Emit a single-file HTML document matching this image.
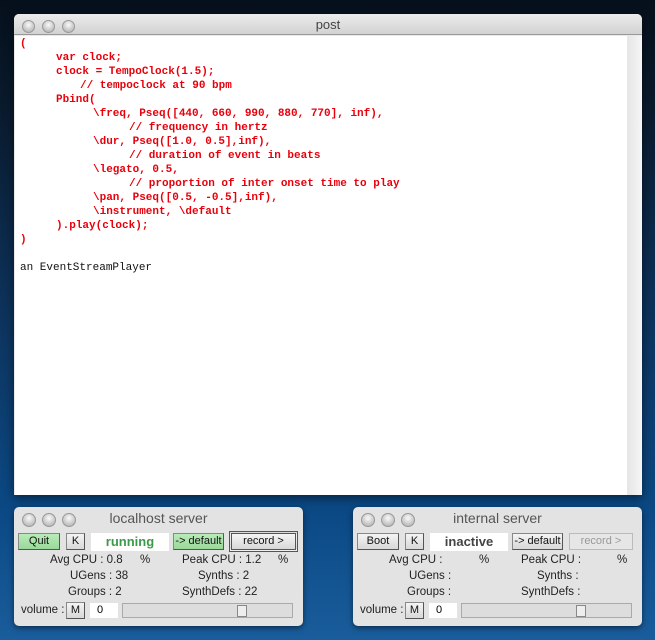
<!DOCTYPE html>
<html><head><meta charset="utf-8"><style>
*{margin:0;padding:0;box-sizing:border-box}
body{width:655px;height:640px;overflow:hidden;position:relative;font-family:"Liberation Sans",sans-serif;
background:linear-gradient(180deg,#06101c 0px,#0a1c30 120px,#0d3560 330px,#0b4a86 520px,#1a5d9c 640px);}
.win{position:absolute;background:#e8e8e8;border-radius:5px 5px 0 0;box-shadow:0 3px 10px rgba(0,0,0,.5)}
.tb{position:absolute;left:0;right:0;top:0;height:21px;border-radius:5px 5px 0 0;background:linear-gradient(#ececec,#d2d2d2);border-bottom:1px solid #999;text-align:center;font-size:13px;color:#444;line-height:21px}
.lights{position:absolute;left:8px;top:4px}
.lights i{display:inline-block;width:13px;height:13px;border-radius:50%;margin-right:7px;background:radial-gradient(circle at 50% 35%,#fafafa,#c8c8c8 60%,#aaa);border:1px solid #999}
.code{position:absolute;left:1px;top:22px;width:612px;bottom:0;background:#fff}
.sb{position:absolute;right:0;top:22px;width:14px;bottom:0;background:linear-gradient(90deg,#e6e6e6,#f6f6f6)}
.l{position:absolute;font-family:"Liberation Mono",monospace;font-weight:bold;font-size:11px;color:#e8000b;white-space:pre;line-height:14px}
.pan{position:absolute;top:507px;width:289px;height:119px;background:#e3e3e3;border-radius:5px;box-shadow:0 2px 6px rgba(0,0,0,.5)}
.pan .tb{height:22px;line-height:23px;background:none;border:none;font-size:14px;color:#555}
.pan .lights i{width:14px;height:14px;margin-right:6px}
.btn{position:absolute;height:17px;font-size:11px;line-height:15px;text-align:center;border:1px solid #888;border-right-color:#555;border-bottom-color:#555;background:linear-gradient(#f4f4f4,#d8d8d8);color:#111}
.g{background:linear-gradient(#b8ecb8,#9ad89a)}
.t{position:absolute;font-size:11.5px;color:#222;white-space:pre}
.st{position:absolute;top:26px;left:77px;width:78px;height:18px;background:#fff;text-align:center;font-weight:bold;font-size:13px;line-height:18px}
.slider{position:absolute;left:108px;top:96px;width:171px;height:15px;border:1px solid #aaa;background:#ddd}
.slider b{position:absolute;left:114px;top:1px;width:10px;height:12px;background:#eee;border:1px solid #888}
.num{position:absolute;left:76px;top:96px;width:28px;height:15px;background:#fff;font-size:11px;text-align:center;line-height:14px;padding-right:8px}
</style></head><body>
<div class="win" style="left:14px;top:14px;width:628px;height:481px">
<div class="tb">post<div class="lights"><i></i><i></i><i></i></div></div>
<div class="code"></div><div class="sb"></div>
</div>
<div class="l" style="left:20px;top:37px">(</div>
<div class="l" style="left:56px;top:51px">var clock;</div>
<div class="l" style="left:56px;top:65px">clock = TempoClock(1.5);</div>
<div class="l" style="left:80px;top:79px">// tempoclock at 90 bpm</div>
<div class="l" style="left:56px;top:93px">Pbind(</div>
<div class="l" style="left:93px;top:107px">\freq, Pseq([440, 660, 990, 880, 770], inf),</div>
<div class="l" style="left:129px;top:121px">// frequency in hertz</div>
<div class="l" style="left:93px;top:135px">\dur, Pseq([1.0, 0.5],inf),</div>
<div class="l" style="left:129px;top:149px">// duration of event in beats</div>
<div class="l" style="left:93px;top:163px">\legato, 0.5,</div>
<div class="l" style="left:129px;top:177px">// proportion of inter onset time to play</div>
<div class="l" style="left:93px;top:191px">\pan, Pseq([0.5, -0.5],inf),</div>
<div class="l" style="left:93px;top:205px">\instrument, \default</div>
<div class="l" style="left:56px;top:219px">).play(clock);</div>
<div class="l" style="left:20px;top:233px">)</div>
<div class="l" style="left:20px;top:261px;color:#111;font-weight:normal">an EventStreamPlayer</div>

<div class="pan" style="left:14px">
<div class="tb">localhost server<div class="lights"><i></i><i></i><i></i></div></div>
<div class="btn g" style="left:4px;top:26px;width:42px">Quit</div>
<div class="btn" style="left:52px;top:26px;width:19px">K</div>
<div class="st" style="color:#3a9a4a">running</div>
<div class="btn g" style="left:159px;top:26px;width:51px">-&gt; default</div>
<div class="btn" style="left:215px;top:24px;width:69px;height:21px;border:3px double #555;line-height:14px">record &gt;</div>
<div class="t" style="left:36px;top:47px">Avg CPU : 0.8</div><div class="t" style="left:126px;top:47px">%</div>
<div class="t" style="left:168px;top:47px">Peak CPU : 1.2</div><div class="t" style="left:264px;top:47px">%</div>
<div class="t" style="left:56px;top:63px">UGens : 38</div><div class="t" style="left:184px;top:63px">Synths : 2</div>
<div class="t" style="left:54px;top:79px">Groups : 2</div><div class="t" style="left:168px;top:79px">SynthDefs : 22</div>
<div class="t" style="left:7px;top:97px">volume :</div>
<div class="btn" style="left:52px;top:95px;width:19px">M</div>
<div class="num">0</div>
<div class="slider"><b></b></div>
</div>

<div class="pan" style="left:353px">
<div class="tb">internal server<div class="lights"><i></i><i></i><i></i></div></div>
<div class="btn" style="left:4px;top:26px;width:42px">Boot</div>
<div class="btn" style="left:52px;top:26px;width:19px">K</div>
<div class="st" style="color:#444">inactive</div>
<div class="btn" style="left:159px;top:26px;width:51px">-&gt; default</div>
<div class="btn" style="left:216px;top:26px;width:64px;color:#999;border-color:#bbb;background:#e6e6e6">record &gt;</div>
<div class="t" style="left:36px;top:47px">Avg CPU :</div><div class="t" style="left:126px;top:47px">%</div>
<div class="t" style="left:168px;top:47px">Peak CPU :</div><div class="t" style="left:264px;top:47px">%</div>
<div class="t" style="left:56px;top:63px">UGens :</div><div class="t" style="left:184px;top:63px">Synths :</div>
<div class="t" style="left:54px;top:79px">Groups :</div><div class="t" style="left:168px;top:79px">SynthDefs :</div>
<div class="t" style="left:7px;top:97px">volume :</div>
<div class="btn" style="left:52px;top:95px;width:19px">M</div>
<div class="num">0</div>
<div class="slider"><b></b></div>
</div>
</body></html>
